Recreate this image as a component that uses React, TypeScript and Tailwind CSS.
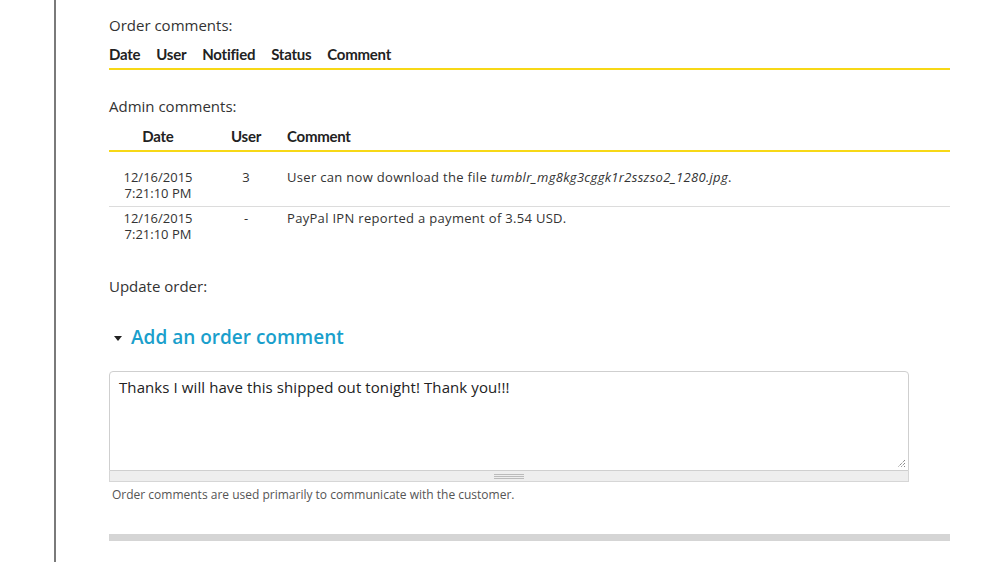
import React from "react";

const body = { fontFamily: '"Open Sans", "Liberation Sans", sans-serif' };
const head = { fontFamily: 'Lato, "Liberation Sans", sans-serif' };

function ResizeGrip() {
  return (
    <svg width="10" height="10" viewBox="0 0 10 10" className="absolute bottom-[2px] right-[2px]">
      <path d="M9 2 L2 9 M9 5 L5 9 M9 8 L8 9" stroke="#555" strokeWidth="1" strokeDasharray="1 1" fill="none" />
    </svg>
  );
}

export default function App() {
  const rows = [
    {
      date: "12/16/2015",
      time: "7:21:10 PM",
      user: "3",
      comment: (
        <>
          User can now download the file <em>tumblr_mg8kg3cggk1r2sszso2_1280.jpg</em>.
        </>
      ),
    },
    {
      date: "12/16/2015",
      time: "7:21:10 PM",
      user: "-",
      comment: <>PayPal IPN reported a payment of 3.54 USD.</>,
    },
  ];

  return (
    <div className="flex min-h-[562px] w-[1006px] bg-white text-[#333]" style={body}>
      <div className="ml-[54px] w-[2px] shrink-0 bg-[#7a7a7a]" />
      <div className="ml-[53px] w-[841px] pt-[14px]">
        <div className="text-[15px] leading-[22px] text-[#333]">Order comments:</div>
        <div
          className="mt-[8px] flex gap-[16px] border-b-2 border-[#f7d817] pb-[4px] text-[15px] font-bold leading-[20px] tracking-[-0.25px] text-[#222]"
          style={head}
        >
          <span>Date</span>
          <span>User</span>
          <span>Notified</span>
          <span>Status</span>
          <span>Comment</span>
        </div>

        <div className="mt-[25px] text-[15px] leading-[22px] text-[#333]">Admin comments:</div>
        <div
          className="mt-[9px] grid grid-cols-[98px_78px_1fr] border-b-2 border-[#f7d817] pb-[4px] text-[15px] font-bold leading-[20px] tracking-[-0.25px] text-[#222]"
          style={head}
        >
          <span className="text-center">Date</span>
          <span className="text-center">User</span>
          <span className="pl-[2px]">Comment</span>
        </div>
        <div className="pt-[14px] text-[13px] leading-[16px] text-[#333]">
          {rows.map((r, i) => (
            <div
              key={i}
              className={
                "grid grid-cols-[98px_78px_1fr] pb-[5px] pt-[3px] " +
                (i === 0 ? "border-b border-[#dcdcdc]" : "")
              }
            >
              <span className="text-center">
                {r.date}
                <br />
                {r.time}
              </span>
              <span className="text-center">{r.user}</span>
              <span className="pl-[2px] tracking-[0.31px]">{r.comment}</span>
            </div>
          ))}
        </div>

        <div className="mt-[28px] text-[15px] leading-[22px] text-[#333]">Update order:</div>
        <div className="mt-[26px] flex items-center gap-[9px]">
          <svg width="8" height="5" viewBox="0 0 8 5" className="ml-[5px] mt-[2px]">
            <path d="M0 0 H8 L4 5 Z" fill="#222" />
          </svg>
          <span className="text-[19px] font-semibold leading-[28px] text-[#1a9fcc]">Add an order comment</span>
        </div>

        <div className="mt-[20px] w-[800px]">
          <div className="relative h-[100px] rounded-t-[4px] border border-[#cfcfcf] px-[9px] py-[4px] text-[15px] leading-[22px] tracking-[0.09px] text-[#222]">
            Thanks I will have this shipped out tonight! Thank you!!!
            <ResizeGrip />
          </div>
          <div className="flex h-[11px] items-center justify-center border border-t-0 border-[#d6d6d6] bg-[#eeeeee]">
            <div className="flex w-[30px] flex-col gap-[1px]">
              <div className="h-px bg-[#bbb]" />
              <div className="h-px bg-[#bbb]" />
              <div className="h-px bg-[#bbb]" />
            </div>
          </div>
        </div>
        <div className="mt-[4px] pl-[3px] text-[12px] leading-[18px] text-[#555]">
          Order comments are used primarily to communicate with the customer.
        </div>
        <div className="mt-[30px] h-[7px] w-[841px] bg-[#d5d5d5]" />
      </div>
    </div>
  );
}
